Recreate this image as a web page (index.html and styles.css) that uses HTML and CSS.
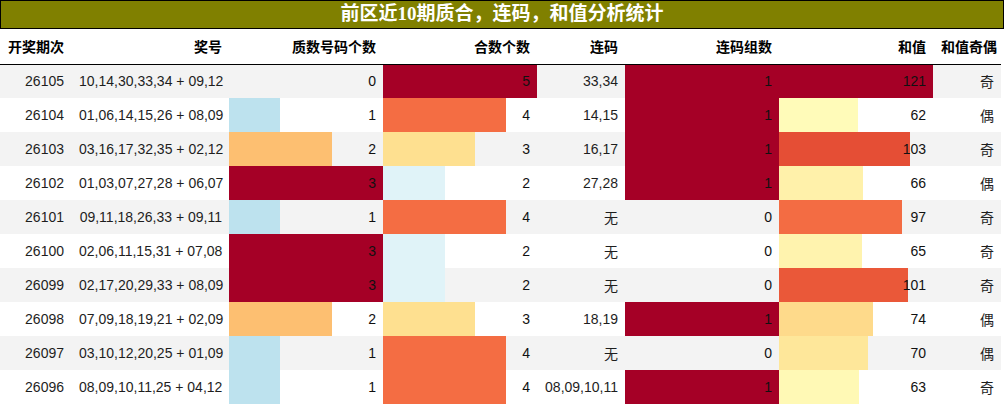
FILE: index.html
```html
<!DOCTYPE html>
<html lang="zh">
<head>
<meta charset="utf-8">
<title>前区近10期质合，连码，和值分析统计</title>
<link rel="stylesheet" href="styles.css">
</head>
<body>
<div class="title">前区近10期质合，连码，和值分析统计</div>
<table class="stats">
  <colgroup>
    <col class="c-issue"><col class="c-nums"><col class="c-bar"><col class="c-bar"><col class="c-pair"><col class="c-bar"><col class="c-bar"><col class="c-oe">
  </colgroup>
  <thead>
    <tr>
      <th class="left">开奖期次</th><th>奖号</th><th>质数号码个数</th><th>合数个数</th><th>连码</th><th>连码组数</th><th>和值</th><th>和值奇偶</th>
    </tr>
  </thead>
  <tbody>
    <tr>
      <td>26105</td><td>10,14,30,33,34 + 09,12</td>
      <td class="bar" style="--w:0%;--c:transparent">0</td>
      <td class="bar" style="--w:100%;--c:#a50026">5</td>
      <td>33,34</td>
      <td class="bar" style="--w:100%;--c:#a50026">1</td>
      <td class="bar" style="--w:100%;--c:#a50026">121</td>
      <td>奇</td>
    </tr>
    <tr>
      <td>26104</td><td>01,06,14,15,26 + 08,09</td>
      <td class="bar" style="--w:33.33%;--c:rgb(189,226,238)">1</td>
      <td class="bar" style="--w:80%;--c:#f46d43">4</td>
      <td>14,15</td>
      <td class="bar" style="--w:100%;--c:#a50026">1</td>
      <td class="bar" style="--w:51.24%;--c:rgb(255,251,185)">62</td>
      <td>偶</td>
    </tr>
    <tr>
      <td>26103</td><td>03,16,17,32,35 + 02,12</td>
      <td class="bar" style="--w:66.67%;--c:rgb(253,191,113)">2</td>
      <td class="bar" style="--w:60%;--c:#fee090">3</td>
      <td>16,17</td>
      <td class="bar" style="--w:100%;--c:#a50026">1</td>
      <td class="bar" style="--w:85.12%;--c:rgb(229,78,53)">103</td>
      <td>奇</td>
    </tr>
    <tr>
      <td>26102</td><td>01,03,07,27,28 + 06,07</td>
      <td class="bar" style="--w:100%;--c:#a50026">3</td>
      <td class="bar" style="--w:40%;--c:#e0f3f8">2</td>
      <td>27,28</td>
      <td class="bar" style="--w:100%;--c:#a50026">1</td>
      <td class="bar" style="--w:54.55%;--c:rgb(255,241,170)">66</td>
      <td>偶</td>
    </tr>
    <tr>
      <td>26101</td><td>09,11,18,26,33 + 09,11</td>
      <td class="bar" style="--w:33.33%;--c:rgb(189,226,238)">1</td>
      <td class="bar" style="--w:80%;--c:#f46d43">4</td>
      <td>无</td>
      <td class="bar" style="--w:0%;--c:transparent">0</td>
      <td class="bar" style="--w:80.17%;--c:rgb(243,108,67)">97</td>
      <td>奇</td>
    </tr>
    <tr>
      <td>26100</td><td>02,06,11,15,31 + 07,08</td>
      <td class="bar" style="--w:100%;--c:#a50026">3</td>
      <td class="bar" style="--w:40%;--c:#e0f3f8">2</td>
      <td>无</td>
      <td class="bar" style="--w:0%;--c:transparent">0</td>
      <td class="bar" style="--w:53.72%;--c:rgb(255,243,174)">65</td>
      <td>奇</td>
    </tr>
    <tr>
      <td>26099</td><td>02,17,20,29,33 + 08,09</td>
      <td class="bar" style="--w:100%;--c:#a50026">3</td>
      <td class="bar" style="--w:40%;--c:#e0f3f8">2</td>
      <td>无</td>
      <td class="bar" style="--w:0%;--c:transparent">0</td>
      <td class="bar" style="--w:83.47%;--c:rgb(234,88,57)">101</td>
      <td>奇</td>
    </tr>
    <tr>
      <td>26098</td><td>07,09,18,19,21 + 02,09</td>
      <td class="bar" style="--w:66.67%;--c:rgb(253,191,113)">2</td>
      <td class="bar" style="--w:60%;--c:#fee090">3</td>
      <td>18,19</td>
      <td class="bar" style="--w:100%;--c:#a50026">1</td>
      <td class="bar" style="--w:61.16%;--c:rgb(254,218,139)">74</td>
      <td>偶</td>
    </tr>
    <tr>
      <td>26097</td><td>03,10,12,20,25 + 01,09</td>
      <td class="bar" style="--w:33.33%;--c:rgb(189,226,238)">1</td>
      <td class="bar" style="--w:80%;--c:#f46d43">4</td>
      <td>无</td>
      <td class="bar" style="--w:0%;--c:transparent">0</td>
      <td class="bar" style="--w:57.85%;--c:rgb(254,231,154)">70</td>
      <td>偶</td>
    </tr>
    <tr>
      <td>26096</td><td>08,09,10,11,25 + 04,12</td>
      <td class="bar" style="--w:33.33%;--c:rgb(189,226,238)">1</td>
      <td class="bar" style="--w:80%;--c:#f46d43">4</td>
      <td>08,09,10,11</td>
      <td class="bar" style="--w:100%;--c:#a50026">1</td>
      <td class="bar" style="--w:52.07%;--c:rgb(255,249,181)">63</td>
      <td>奇</td>
    </tr>
  </tbody>
</table>
</body>
</html>
```
FILE: styles.css
```css
html, body {
  margin: 0;
  padding: 0;
  background: #fff;
}

body {
  font-family: "Liberation Sans", Arial, "Noto Sans CJK SC", sans-serif;
  color: #1e1e1e;
  width: 1004px;
}

.title {
  box-sizing: border-box;
  height: 29px;
  border: 1px solid #000;
  background: #808000;
  color: #fff;
  text-align: center;
  font-family: "Liberation Serif", "Noto Sans CJK SC", serif;
  font-weight: bold;
  font-size: 19px;
  line-height: 26px;
}

.stats {
  width: 1001px;
  table-layout: fixed;
  border-collapse: collapse;
  border-spacing: 0;
  font-size: 14px;
}

.c-issue { width: 71px; }
.c-nums { width: 158px; }
.c-bar { width: 154px; }
.c-pair { width: 88px; }
.c-oe { width: 68px; }

.stats th,
.stats td {
  box-sizing: border-box;
  height: 34px;
  padding: 0 7px 0 8px;
  text-align: right;
  vertical-align: middle;
  white-space: nowrap;
}

.stats th {
  font-family: "Noto Sans CJK SC", "Liberation Sans", sans-serif;
  font-weight: bold;
  font-size: 14px;
  color: #000;
  height: 35px;
  border-bottom: 1px solid #000;
}

.stats th.left {
  text-align: left;
}

.stats td {
  font-family: "Liberation Sans", "Noto Sans CJK SC", sans-serif;
}

.stats tbody tr:nth-child(odd) {
  background: #f3f3f3;
}

.stats tbody tr:nth-child(even) {
  background: #fff;
}

.stats td.bar {
  background: linear-gradient(90deg, var(--c) 0, var(--c) var(--w), transparent var(--w));
  color: #111;
}
```
